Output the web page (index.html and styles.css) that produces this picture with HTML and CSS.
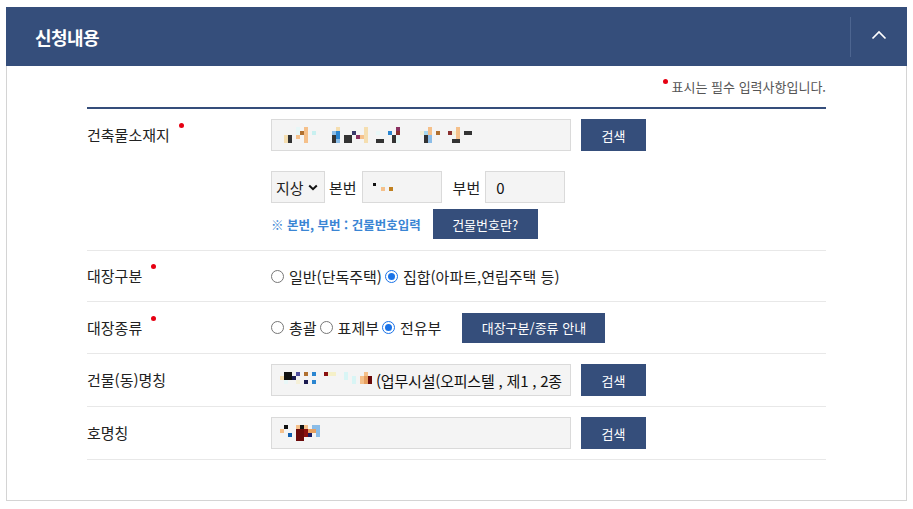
FILE: index.html
```html
<!DOCTYPE html>
<html lang="ko">
<head>
<meta charset="utf-8">
<title>신청내용</title>
<link rel="stylesheet" href="styles.css">
</head>
<body>
<section class="panel">
  <header class="panel-head">
    <h2 class="panel-title">신청내용</h2>
    <button class="toggle" type="button" aria-label="접기">
      <svg width="16" height="10" viewBox="0 0 16 10"><path d="M1.5 8.5 L8 2 L14.5 8.5" fill="none" stroke="#fff" stroke-width="1.7"/></svg>
    </button>
  </header>
  <div class="panel-body">
    <p class="req-note"><span class="dot"></span>표시는 필수 입력사항입니다.</p>
    <div class="form">
      <div class="row first">
        <div class="label">건축물소재지<span class="dot"></span></div>
        <div class="field">
          <div class="line">
            <div class="input wide">
              <svg class="mosaic" width="200" height="16" viewBox="0 0 200 16">
                <rect x="0" y="8" width="4" height="8" fill="#f5deb0"/>
                <rect x="4" y="8" width="4" height="8" fill="#333"/>
                <rect x="12" y="0" width="4" height="8" fill="#e8f7f7"/>
                <rect x="12" y="8" width="4" height="4" fill="#f5c08a"/>
                <rect x="16" y="4" width="4" height="4" fill="#b07030"/>
                <rect x="20" y="0" width="4" height="16" fill="#f5c08a"/>
                <rect x="28" y="4" width="4" height="4" fill="#c8f0f0"/>
                <rect x="48" y="4" width="4" height="4" fill="#8bbde8"/>
                <rect x="48" y="8" width="4" height="8" fill="#333"/>
                <rect x="52" y="0" width="4" height="4" fill="#f5deb0"/>
                <rect x="52" y="4" width="4" height="8" fill="#2a85d0"/>
                <rect x="52" y="12" width="4" height="4" fill="#8bbde8"/>
                <rect x="60" y="8" width="8" height="8" fill="#333"/>
                <rect x="68" y="4" width="4" height="4" fill="#3a3a6a"/>
                <rect x="72" y="8" width="4" height="4" fill="#8a3060"/>
                <rect x="76" y="8" width="4" height="4" fill="#f5c08a"/>
                <rect x="80" y="0" width="4" height="16" fill="#f5deb0"/>
                <rect x="92" y="4" width="4" height="4" fill="#e8f7f7"/>
                <rect x="92" y="12" width="8" height="4" fill="#333"/>
                <rect x="104" y="4" width="4" height="4" fill="#2a85d0"/>
                <rect x="108" y="8" width="4" height="8" fill="#333"/>
                <rect x="112" y="0" width="4" height="4" fill="#8a3060"/>
                <rect x="112" y="4" width="4" height="4" fill="#8a3030"/>
                <rect x="112" y="8" width="4" height="8" fill="#e8f7f7"/>
                <rect x="136" y="4" width="4" height="4" fill="#f5f0d8"/>
                <rect x="140" y="4" width="4" height="4" fill="#a8d8f0"/>
                <rect x="140" y="8" width="4" height="8" fill="#333"/>
                <rect x="144" y="0" width="4" height="8" fill="#f5c08a"/>
                <rect x="144" y="8" width="4" height="8" fill="#8bbde8"/>
                <rect x="152" y="4" width="4" height="4" fill="#b07030"/>
                <rect x="164" y="4" width="4" height="4" fill="#8a3030"/>
                <rect x="168" y="4" width="4" height="4" fill="#f5f0d8"/>
                <rect x="172" y="0" width="4" height="12" fill="#f5c08a"/>
                <rect x="168" y="12" width="8" height="4" fill="#333"/>
                <rect x="180" y="4" width="8" height="4" fill="#333"/>
              </svg>
            </div>
            <button class="btn btn-search" type="button">검색</button>
          </div>
          <div class="line sub">
            <div class="select">지상<svg width="10" height="7" viewBox="0 0 10 7"><path d="M1.2 1.5 L5 5.2 L8.8 1.5" fill="none" stroke="#111" stroke-width="2"/></svg></div>
            <span class="txt">본번</span>
            <div class="input short">
              <svg class="mosaic" width="24" height="12" viewBox="0 0 24 12">
                <rect x="0" y="2" width="3" height="3" fill="#111"/>
                <rect x="8" y="3" width="4" height="3" fill="#e8f7f7"/>
                <rect x="8" y="6" width="4" height="4" fill="#f5c08a"/>
                <rect x="16" y="6" width="4" height="4" fill="#c08020"/>
              </svg>
            </div>
            <span class="txt gap">부번</span>
            <div class="input short">0</div>
          </div>
          <div class="line hint-line">
            <span class="hint">※ 본번, 부번 : 건물번호입력</span>
            <button class="btn btn-small" type="button">건물번호란?</button>
          </div>
        </div>
      </div>

      <div class="row">
        <div class="label short-label">대장구분<span class="dot"></span></div>
        <div class="field radios">
          <label class="radio"><span class="rb"></span>일반(단독주택)</label>
          <label class="radio"><span class="rb on"></span>집합(아파트,연립주택 등)</label>
        </div>
      </div>

      <div class="row">
        <div class="label short-label tall">대장종류<span class="dot"></span></div>
        <div class="field radios tall">
          <label class="radio"><span class="rb"></span>총괄</label>
          <label class="radio"><span class="rb"></span>표제부</label>
          <label class="radio"><span class="rb on"></span>전유부</label>
          <button class="btn btn-guide" type="button">대장구분/종류 안내</button>
        </div>
      </div>

      <div class="row">
        <div class="label">건물(동)명칭</div>
        <div class="field line">
          <div class="input wide tight">
            <svg class="mosaic" width="96" height="16" viewBox="0 0 96 16">
              <rect x="0" y="4" width="4" height="4" fill="#f5deb0"/>
              <rect x="4" y="0" width="8" height="8" fill="#111"/>
              <rect x="4" y="8" width="4" height="4" fill="#e8f7f7"/>
              <rect x="12" y="4" width="4" height="4" fill="#1a1a50"/>
              <rect x="16" y="0" width="4" height="4" fill="#5050a0"/>
              <rect x="16" y="8" width="4" height="4" fill="#f5f0d8"/>
              <rect x="24" y="0" width="4" height="4" fill="#b07030"/>
              <rect x="24" y="8" width="4" height="4" fill="#1a1a50"/>
              <rect x="32" y="0" width="4" height="4" fill="#2a85d0"/>
              <rect x="32" y="8" width="4" height="4" fill="#2a85d0"/>
              <rect x="44" y="0" width="4" height="4" fill="#8a1010"/>
              <rect x="48" y="0" width="8" height="4" fill="#f5f0c8"/>
              <rect x="64" y="0" width="4" height="8" fill="#d8f5f5"/>
              <rect x="72" y="4" width="4" height="8" fill="#d8f5f5"/>
              <rect x="80" y="4" width="4" height="8" fill="#f5c08a"/>
              <rect x="84" y="0" width="4" height="4" fill="#f5c08a"/>
              <rect x="84" y="4" width="4" height="8" fill="#e8a060"/>
              <rect x="88" y="4" width="4" height="8" fill="#6a0a0a"/>
            </svg><span class="val">(업무시설(오피스텔 , 제1 , 2종</span>
          </div>
          <button class="btn btn-search" type="button">검색</button>
        </div>
      </div>

      <div class="row">
        <div class="label">호명칭</div>
        <div class="field line">
          <div class="input wide tight">
            <svg class="mosaic" width="44" height="16" viewBox="0 0 44 16">
              <rect x="4" y="0" width="4" height="4" fill="#111"/>
              <rect x="0" y="4" width="4" height="4" fill="#f5c08a"/>
              <rect x="8" y="8" width="4" height="4" fill="#1060b0"/>
              <rect x="16" y="0" width="4" height="4" fill="#f5c08a"/>
              <rect x="16" y="4" width="8" height="12" fill="#6a0a0a"/>
              <rect x="20" y="0" width="4" height="4" fill="#111"/>
              <rect x="24" y="0" width="4" height="4" fill="#f5c08a"/>
              <rect x="24" y="4" width="4" height="8" fill="#8a1010"/>
              <rect x="28" y="4" width="8" height="4" fill="#e8a060"/>
              <rect x="28" y="8" width="4" height="4" fill="#1a1a60"/>
              <rect x="32" y="0" width="4" height="4" fill="#8bbde8"/>
              <rect x="36" y="0" width="4" height="12" fill="#8bbde8"/>
            </svg>
          </div>
          <button class="btn btn-search" type="button">검색</button>
        </div>
      </div>
    </div>
  </div>
</section>
</body>
</html>
```

FILE: styles.css
```css
* { box-sizing: border-box; }

body {
  margin: 0;
  background: #fff;
  font-family: "Noto Sans CJK KR", "Noto Sans", sans-serif;
  color: #222;
}

.panel {
  width: 901px;
  margin: 7px 0 0 6px;
}

.panel-head {
  height: 59px;
  background: #354e7b;
  display: flex;
  align-items: center;
  justify-content: space-between;
}

.panel-title {
  margin: 0 0 0 29px;
  font-size: 18px;
  font-weight: 700;
  color: #fff;
  letter-spacing: -0.6px;
}

.toggle {
  width: 57px;
  height: 40px;
  border: 0;
  border-left: 1px solid #4d6590;
  background: transparent;
  padding: 0 0 3px 0;
  display: flex;
  align-items: center;
  justify-content: center;
}

.panel-body {
  border: 1px solid #d4d4d4;
  border-top: 0;
  padding: 11px 80px 40px 80px;
}

.req-note {
  margin: 0;
  text-align: right;
  font-size: 13px;
  line-height: 20px;
  color: #555;
}

.req-note .dot {
  position: relative;
  top: -7px;
  margin-right: 4px;
}

.dot {
  display: inline-block;
  width: 5px;
  height: 5px;
  border-radius: 50%;
  background: #e60012;
  vertical-align: middle;
}

.form {
  margin-top: 10px;
  border-top: 2px solid #354e7b;
}

.row {
  display: flex;
  padding: 10px 0;
  border-bottom: 1px solid #e8e8e8;
}

.row.first {
  padding-bottom: 11px;
}

.label {
  width: 184px;
  height: 32px;
  flex: none;
  font-size: 15px;
  line-height: 32px;
  color: #222;
}

.label.short-label {
  height: 30px;
  line-height: 30px;
}

.label.short-label.tall {
  height: 31px;
  line-height: 31px;
}

.label .dot {
  position: relative;
  top: -11px;
  margin-left: 9px;
}

.field {
  flex: 1;
  font-size: 15px;
  color: #222;
}

.line {
  display: flex;
  align-items: center;
}

.line.sub {
  margin-top: 20px;
}

.hint-line {
  margin-top: 6px;
}

.input {
  height: 32px;
  background: #f4f4f4;
  border: 1px solid #dadada;
  display: flex;
  align-items: center;
  padding: 0 10px;
  font-size: 15px;
  color: #111;
  white-space: nowrap;
  overflow: hidden;
}

.input.wide { width: 300px; padding-left: 12px; }
.input.wide.tight { padding-left: 8px; }
.input.short { width: 80px; }
.input .val { letter-spacing: -0.2px; }

.mosaic { flex: none; display: block; }

.select {
  width: 54px;
  height: 32px;
  background: #f4f4f4;
  border: 1px solid #dadada;
  display: flex;
  align-items: center;
  gap: 4px;
  padding-left: 4px;
  font-size: 15px;
}

.txt {
  margin: 0 5px 0 4px;
  font-size: 15px;
}

.txt.gap { margin-left: 11px; }

.hint {
  font-size: 12.5px;
  font-weight: 700;
  color: #3a85d4;
  margin-right: 12px;
}

.btn {
  border: 0;
  background: #354e7b;
  color: #fff;
  font-family: inherit;
  font-size: 13px;
  padding: 0;
  cursor: pointer;
}

.btn-search {
  width: 65px;
  height: 32px;
  margin-left: 10px;
}

.btn-small {
  width: 105px;
  height: 30px;
}

.btn-guide {
  width: 143px;
  height: 30px;
  margin-left: 18px;
}

.radios {
  display: flex;
  align-items: center;
  height: 30px;
}

.radios.tall {
  height: 31px;
}

.radio {
  display: inline-flex;
  align-items: center;
  margin-right: 3px;
  font-size: 15px;
}

.rb {
  width: 13px;
  height: 13px;
  border: 1px solid #777;
  border-radius: 50%;
  margin-right: 5px;
  background: #fff;
  position: relative;
}

.rb.on {
  border-color: #1a73e8;
}

.rb.on::after {
  content: "";
  position: absolute;
  left: 2px;
  top: 2px;
  width: 7px;
  height: 7px;
  border-radius: 50%;
  background: #1a73e8;
}
```
